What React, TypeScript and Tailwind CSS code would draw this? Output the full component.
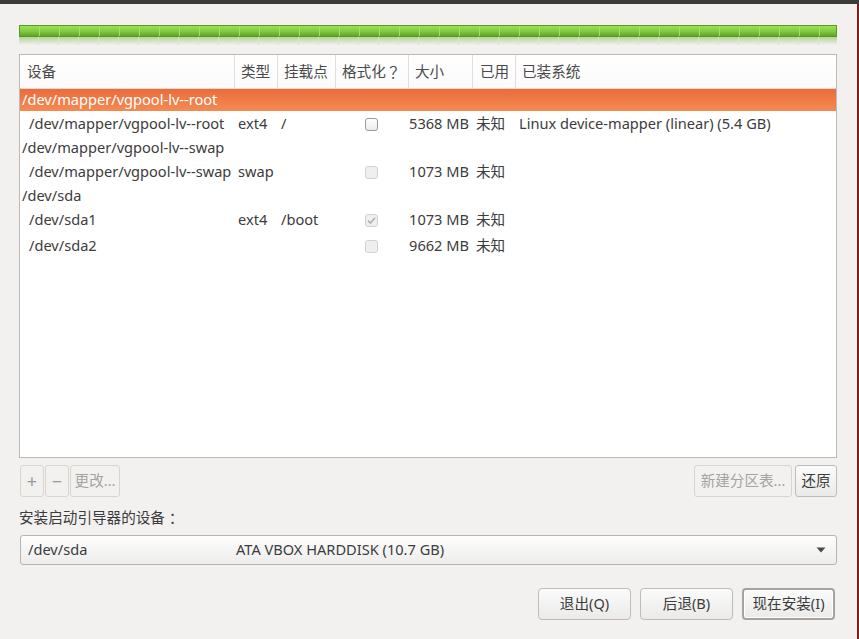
import React from "react";

const FONT = '"Noto Sans", "Noto Sans CJK SC", sans-serif';

function Check({ state }: { state: "on" | "off" | "checked" }) {
  if (state === "on") {
    return (
      <div className="w-[13px] h-[13px] rounded-[3px] border border-[#9a9a9a] bg-gradient-to-b from-[#ffffff] to-[#ececec]" />
    );
  }
  return (
    <div className="w-[13px] h-[13px] rounded-[3px] border border-[#d2d2d2] bg-[#efefef] flex items-center justify-center">
      {state === "checked" && (
        <svg width="11" height="11" viewBox="0 0 11 11">
          <path d="M2 5.6 L4.4 8 L9 2.8" fill="none" stroke="#b0b0b0" strokeWidth="1.6" />
        </svg>
      )}
    </div>
  );
}

type Row = {
  dev: string;
  child?: boolean;
  selected?: boolean;
  type?: string;
  mount?: string;
  check?: "on" | "off" | "checked";
  size?: string;
  used?: string;
  sys?: string;
  h: string;
};

const rows: Row[] = [
  { dev: "/dev/mapper/vgpool-lv--root", selected: true, h: "h-[22px]" },
  { dev: "/dev/mapper/vgpool-lv--root", child: true, type: "ext4", mount: "/", check: "on", size: "5368 MB", used: "未知", sys: "Linux device-mapper (linear) (5.4 GB)", h: "h-[26px]" },
  { dev: "/dev/mapper/vgpool-lv--swap", h: "h-[22px]" },
  { dev: "/dev/mapper/vgpool-lv--swap", child: true, type: "swap", check: "off", size: "1073 MB", used: "未知", h: "h-[26px]" },
  { dev: "/dev/sda", h: "h-[22px]" },
  { dev: "/dev/sda1", child: true, type: "ext4", mount: "/boot", check: "checked", size: "1073 MB", used: "未知", h: "h-[26px]" },
  { dev: "/dev/sda2", child: true, check: "off", size: "9662 MB", used: "未知", h: "h-[26px]" },
];

const GRID = "grid grid-cols-[214px_43px_58px_73px_64px_43px_1fr]";

export default function App() {
  const segs = Array.from({ length: 42 });
  return (
    <div
      className="w-[859px] h-[639px] bg-[#f2f1f0] flex flex-col overflow-hidden text-[#3c3c3c] text-[14.6px]"
      style={{ fontFamily: FONT }}
    >
      <div className="h-[4px] bg-[#3c3b37] shrink-0" />
      <div className="flex flex-1 min-h-0">
        <div className="flex-1 min-w-0 flex flex-col pl-[19px] pr-[20px] pt-[21px]">
          {/* progress bar */}
          <div className="w-full h-[12px] border border-[#5a9a22] bg-gradient-to-b from-[#9be35a] via-[#82cc40] to-[#5ea424] flex overflow-hidden">
            {segs.map((_, i) => (
              <div
                key={i}
                className={
                  i === 0
                    ? "w-[19px] shrink-0 h-full"
                    : "w-[20px] shrink-0 h-full border-l border-[#a5dc74]"
                }
              />
            ))}
          </div>
          <div className="w-full h-[8px] bg-gradient-to-b from-[#b3d296] to-[#f2f1f0] flex overflow-hidden">
            {segs.map((_, i) => (
              <div
                key={i}
                className={
                  i === 0
                    ? "w-[19px] shrink-0 h-full"
                    : "w-[20px] shrink-0 h-full border-l border-[#d6e6c8]"
                }
              />
            ))}
          </div>

          {/* table */}
          <div className="mt-[9px] h-[404px] border border-[#bdb9b4] bg-white flex flex-col">
            <div className={`${GRID} h-[34px] border-b border-[#dcd9d5] bg-gradient-to-b from-[#ffffff] to-[#fbfbfb] text-[#4a4a4a] items-stretch`}>
              <div className="pl-[7px] flex items-center">设备</div>
              <div className="pl-[6px] flex items-center border-l border-[#e2dfdb]">类型</div>
              <div className="pl-[6px] flex items-center border-l border-[#e2dfdb]">挂载点</div>
              <div className="pl-[6px] flex items-center border-l border-[#e2dfdb]">
                格式化<span className="inline-block w-[15px] text-center font-['Noto_Sans_CJK_JP']">？</span>
              </div>
              <div className="pl-[6px] flex items-center border-l border-[#e2dfdb]">大小</div>
              <div className="pl-[7px] flex items-center border-l border-[#e2dfdb]">已用</div>
              <div className="pl-[6px] flex items-center border-l border-[#e2dfdb]">已装系统</div>
            </div>
            {rows.map((r, i) => (
              <div
                key={i}
                className={`${GRID} ${r.h} items-center whitespace-nowrap ${
                  r.selected ? "bg-gradient-to-b from-[#ea6c3b] to-[#f48a53] text-white" : ""
                }`}
              >
                <div className={r.child ? "pl-[9px]" : "pl-[2px]"}>{r.dev}</div>
                <div className="pl-[4px]">{r.type ?? ""}</div>
                <div className="pl-[4px]">{r.mount ?? ""}</div>
                <div className="flex justify-center">{r.check ? <Check state={r.check} /> : null}</div>
                <div className="text-right pr-[3px]">{r.size ?? ""}</div>
                <div className="pl-[4px]">{r.used ?? ""}</div>
                <div className="pl-[4px]">{r.sys ?? ""}</div>
              </div>
            ))}
          </div>

          {/* tool buttons */}
          <div className="mt-[7px] h-[32px] flex items-stretch">
            <div className="flex gap-[1px] pl-[1px]">
              <div className="w-[24px] rounded-[3px] border border-[#d8d5d1] bg-[#f2f1f0] text-[#9a9896] flex items-center justify-center text-[18px]">+</div>
              <div className="w-[24px] rounded-[3px] border border-[#d8d5d1] bg-[#f2f1f0] text-[#9a9896] flex items-center justify-center text-[18px]">−</div>
              <div className="w-[50px] rounded-[3px] border border-[#d8d5d1] bg-[#f2f1f0] text-[#a5a3a0] flex items-center justify-center">更改...</div>
            </div>
            <div className="flex-1" />
            <div className="w-[98px] rounded-[3px] border border-[#d8d5d1] bg-[#f2f1f0] text-[#a5a3a0] flex items-center justify-center">新建分区表...</div>
            <div className="ml-[3px] w-[42px] rounded-[3px] border border-[#bfbbb6] bg-gradient-to-b from-[#fbfbfb] to-[#ebeae9] flex items-center justify-center text-[#3c3c3c]">还原</div>
          </div>

          <div className="mt-[12px] h-[18px] flex items-center">
            安装启动引导器的设备<span className="inline-block w-[15px] text-center font-['Noto_Sans_CJK_JP']">：</span>
          </div>

          {/* combo */}
          <div className="mt-[8px] ml-[1px] h-[30px] rounded-[3px] border border-[#b8b4af] bg-gradient-to-b from-[#fdfdfd] to-[#eeedec] flex items-center">
            <div className="pl-[7px] w-[215px] shrink-0">/dev/sda</div>
            <div>ATA VBOX HARDDISK (10.7 GB)</div>
            <div className="flex-1" />
            <svg width="10" height="6" viewBox="0 0 10 6" className="mr-[10px]">
              <path d="M0.5 0.5 L9.5 0.5 L5 5.5 Z" fill="#4a4a4a" />
            </svg>
          </div>

          {/* bottom buttons */}
          <div className="mt-[23px] h-[32px] flex justify-end gap-[9px] pr-[2px]">
            <div className="w-[93px] rounded-[4px] border border-[#bfbbb6] bg-gradient-to-b from-[#fbfbfb] to-[#ebeae9] flex items-center justify-center">退出(Q)</div>
            <div className="w-[93px] rounded-[4px] border border-[#bfbbb6] bg-gradient-to-b from-[#fbfbfb] to-[#ebeae9] flex items-center justify-center">后退(B)</div>
            <div className="w-[93px] rounded-[4px] border-2 border-[#a6a29e] bg-gradient-to-b from-[#fbfbfb] to-[#ebeae9] shadow-[inset_0_0_0_1px_#ffffff] flex items-center justify-center">现在安装(I)</div>
          </div>
        </div>
        <div className="w-[2px] bg-[#7b1e1e] shrink-0" />
      </div>
    </div>
  );
}
